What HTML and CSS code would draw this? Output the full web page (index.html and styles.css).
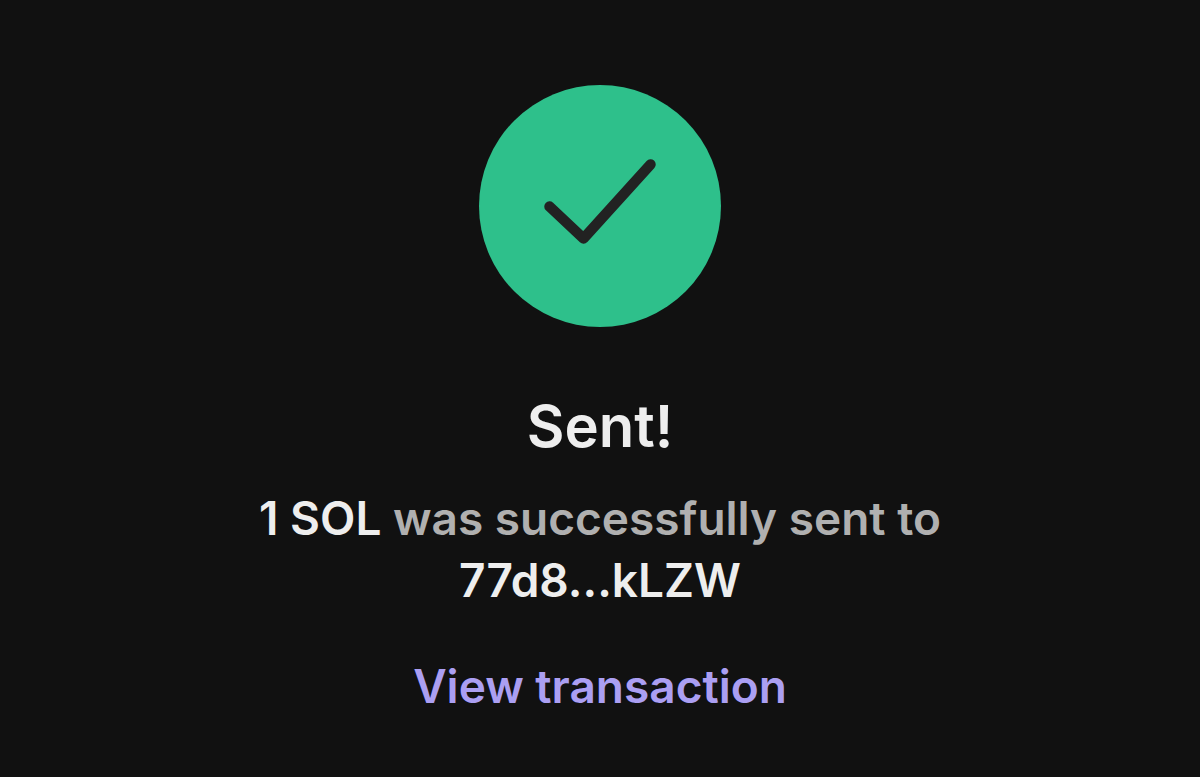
FILE: index.html
```html
<!DOCTYPE html>
<html lang="en">
<head>
  <meta charset="UTF-8">
  <meta name="viewport" content="width=device-width, initial-scale=1.0">
  <title>Sent</title>
  <link rel="stylesheet" href="styles.css">
</head>
<body>

<main class="confirmation">
  <svg class="status-icon" viewBox="0 0 242 242" aria-hidden="true">
    <circle cx="121" cy="121" r="121" fill="#2ec08b"/>
    <path d="M70.5 121.5 L104.5 153.5 L171.5 79.5" fill="none" stroke="#222" stroke-width="10.5" stroke-linecap="round" stroke-linejoin="round"/>
  </svg>

  <h1>Sent!</h1>

  <p class="message">
    <strong>1 SOL</strong> was successfully sent to <strong class="address">77d8...kLZW</strong>
  </p>

  <a href="#" class="transaction-link">View transaction</a>
</main>

</body>
</html>
```
FILE: styles.css
```css
:root {
  --bg: #111111;
  --text-light: #eeeeee;
  --text-muted: #b0b0b0;
  --accent: #ab9ff2;
}

* {
  margin: 0;
  padding: 0;
  box-sizing: border-box;
}

body {
  font-family: Inter, sans-serif;
  font-weight: 600;
  background-color: var(--bg);
  color: var(--text-light);
}

.confirmation {
  display: flex;
  flex-direction: column;
  align-items: center;
  padding: 85px 24px 56px;
  text-align: center;
}

.status-icon {
  width: 242px;
  height: 242px;
}

h1 {
  margin-top: 64px;
  font-size: 58px;
  font-weight: 600;
  line-height: 70px;
}

.message {
  margin-top: 26px;
  font-size: 46px;
  line-height: 62px;
  color: var(--text-muted);
}

.message strong {
  font-weight: 600;
  color: var(--text-light);
}

.address {
  display: block;
}

.transaction-link {
  margin-top: 44px;
  font-size: 46px;
  line-height: 62px;
  color: var(--accent);
  text-decoration: none;
}
```
